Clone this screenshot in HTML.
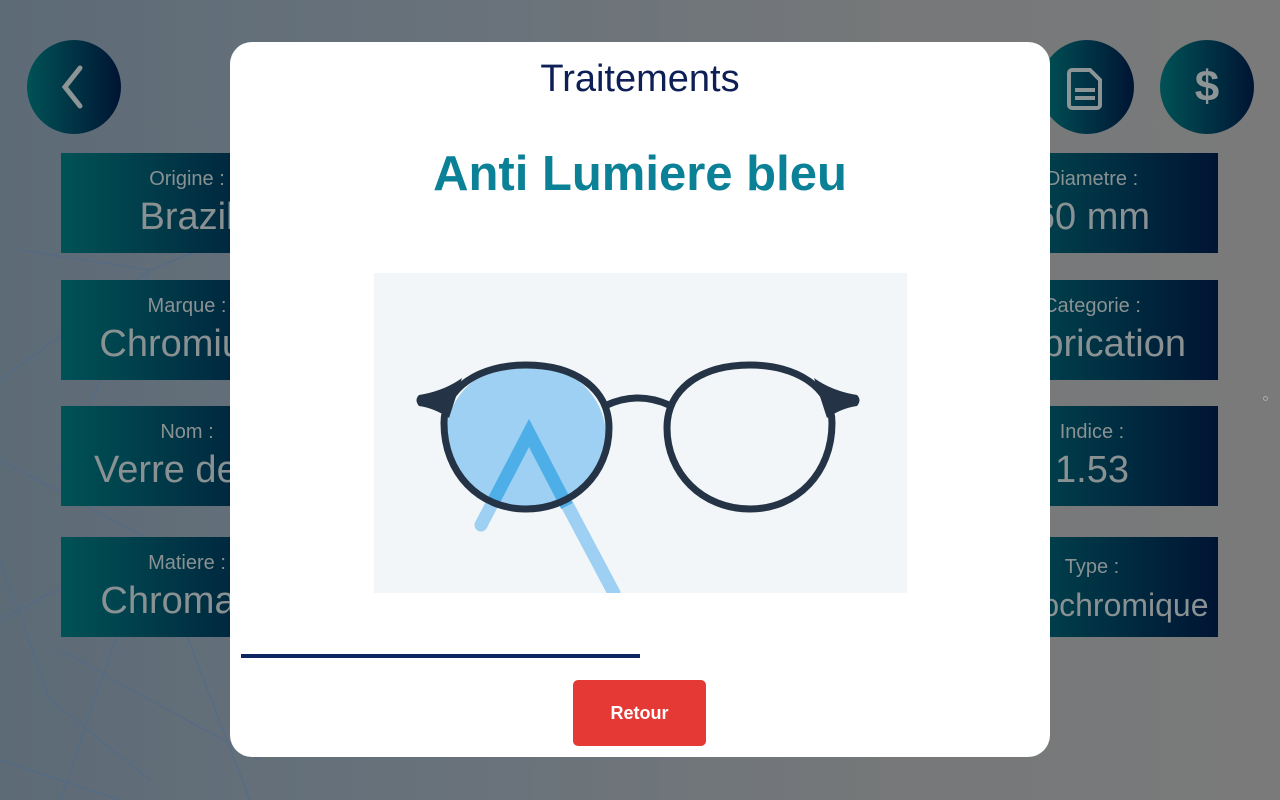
<!DOCTYPE html>
<html><head><meta charset="utf-8"><style>
*{margin:0;padding:0;box-sizing:border-box}
body{width:1280px;height:800px;overflow:hidden;position:relative;font-family:"Liberation Sans",sans-serif;background:linear-gradient(90deg,#5d6b77 0%,#6a737b 40%,#767879 70%,#7a7a7a 100%)}
.circ{position:absolute;width:94px;height:94px;border-radius:50%;background:linear-gradient(90deg,#005256,#001433);top:40px}
.card{position:absolute;height:100px;background:linear-gradient(90deg,#005256,#001433);color:#899193;text-align:center}
.card .l{font-size:20px;margin-top:14px;line-height:24px}
.card .v{font-size:38px;line-height:44px;margin-top:4px}
.modal{position:absolute;left:230px;top:42px;width:820px;height:715px;background:#fff;border-radius:22px}
</style></head><body>
<svg style="position:absolute;left:0;top:0" width="1280" height="800">
<g stroke="#4a6a90" stroke-width="1.2" opacity=".55" fill="none">
<path d="M0 380 L150 270 L300 210 M0 460 L150 540 L60 800 M150 540 L250 800 M20 250 L150 270 M0 560 L50 700 L150 780 M150 270 L60 470 M0 620 L150 540"/>
<path d="M60 650 L150 700 L260 760 M0 760 L120 800"/>
</g></svg>
<div class="circ" style="left:27px"><svg width="94" height="94"><path d="M53 28 L38 47 L53 66" stroke="#8c9496" stroke-width="5" fill="none" stroke-linecap="round"/></svg></div>
<div class="circ" style="left:1040px"><svg width="94" height="94"><path d="M32 30 h18 l10 10 v25 a3 3 0 0 1 -3 3 h-25 a3 3 0 0 1 -3 -3 v-32 a3 3 0 0 1 3 -3z" fill="none" stroke="#8c9496" stroke-width="4"/><rect x="35" y="48" width="20" height="4" fill="#8c9496"/><rect x="35" y="56" width="20" height="4" fill="#8c9496"/></svg></div>
<div class="circ" style="left:1160px"><div style="color:#8c9496;font-size:44px;font-weight:bold;text-align:center;line-height:94px">$</div></div>
<div class="card" style="left:61px;top:153px;width:252px"><div class="l">Origine :</div><div class="v">Brazil</div></div>
<div class="card" style="left:61px;top:280px;width:252px"><div class="l">Marque :</div><div class="v">Chromium</div></div>
<div class="card" style="left:61px;top:406px;width:252px"><div class="l">Nom :</div><div class="v">Verre de fa</div></div>
<div class="card" style="left:61px;top:537px;width:252px"><div class="l">Matiere :</div><div class="v">Chromatic</div></div>
<div class="card" style="left:966px;top:153px;width:252px"><div class="l">Diametre :</div><div class="v">60 mm</div></div>
<div class="card" style="left:966px;top:280px;width:252px"><div class="l">Categorie :</div><div class="v">Fabrication</div></div>
<div class="card" style="left:966px;top:406px;width:252px"><div class="l">Indice :</div><div class="v">1.53</div></div>
<div class="card" style="left:966px;top:537px;width:252px"><div class="l" style="margin-top:18px">Type :</div><div class="v" style="font-size:32px">Photochromique</div></div>
<div style="position:absolute;left:1263px;top:396px;width:5px;height:5px;border:1px solid #aaa;border-radius:50%"></div>
<div class="modal">
<div style="position:absolute;top:16px;width:100%;text-align:center;font-size:38px;color:#0d1f55">Traitements</div>
<div style="position:absolute;top:104px;width:100%;text-align:center;font-size:49px;font-weight:bold;color:#0a8196">Anti Lumiere bleu</div>
<svg style="position:absolute;left:144px;top:231px" width="533" height="320">
<rect width="533" height="320" fill="#f2f6f8"/>
<ellipse cx="152" cy="163" rx="80" ry="73" fill="#9dd0f2"/>
<path d="M107 252 L155 160 L240 320" stroke="#9dd0f2" stroke-width="13" fill="none" stroke-linecap="round"/>
<path d="M118 231 L155 160 L193 233" stroke="#4daee8" stroke-width="13" fill="none"/>
<g fill="none" stroke="#243446" stroke-width="7">
<path d="M152 92 C105 92 70 115 70 150 C70 200 105 236 152 236 C200 236 235 200 235 155 C235 115 200 92 152 92Z"/>
<path d="M376 92 C328 92 293 115 293 155 C293 200 328 236 376 236 C423 236 458 200 458 150 C458 115 423 92 376 92Z"/>
<path d="M233 132 Q264 118 295 132"/>
</g>
<path d="M45 122 Q70 118 88 105 L75 145 Q60 135 45 133 Q40 127 45 122Z M483 122 Q458 118 440 105 L453 145 Q468 135 483 133 Q488 127 483 122Z" fill="#243446"/>
</svg>
<div style="position:absolute;left:11px;top:612px;width:399px;height:4px;background:#0d2460"></div>
<div style="position:absolute;left:343px;top:638px;width:133px;height:66px;background:#e53935;border-radius:5px;color:#fff;font-weight:bold;font-size:18px;text-align:center;line-height:66px">Retour</div>
</div>
</body></html>
